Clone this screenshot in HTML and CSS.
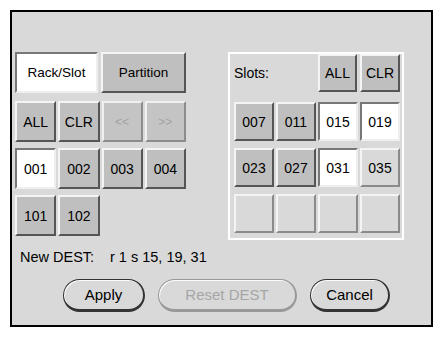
FILE: index.html
```html
<!DOCTYPE html>
<html lang="en">

<head>
  <meta name="viewport" content="width=device-width, initial-scale=1.0" />
  <title>Select DEST</title>
  <link rel="stylesheet" href="styles.css">
</head>

<body>
  <div class="frame">
    <div class="main">
      <div class="left">
        <div class="tabs">
          <div class="btn on">Rack/Slot</div>
          <div class="btn">Partition</div>
        </div>
        <div class="grid">
          <div class="btn">ALL</div>
          <div class="btn">CLR</div>
          <div class="btn off">&lt;&lt;</div>
          <div class="btn off">&gt;&gt;</div>
          <div class="btn on">001</div>
          <div class="btn">002</div>
          <div class="btn">003</div>
          <div class="btn">004</div>
          <div class="btn">101</div>
          <div class="btn">102</div>
        </div>
      </div>
      <div class="slots">
        <div class="slots-head">
          <span class="slots-label">Slots:</span>
          <div class="btn all">ALL</div>
          <div class="btn clr">CLR</div>
        </div>
        <div class="slot-grid">
          <div class="btn">007</div>
          <div class="btn">011</div>
          <div class="btn on">015</div>
          <div class="btn on">019</div>
          <div class="btn">023</div>
          <div class="btn">027</div>
          <div class="btn on">031</div>
          <div class="btn empty">035</div>
          <div class="btn empty"></div>
          <div class="btn empty"></div>
          <div class="btn empty"></div>
          <div class="btn empty"></div>
        </div>
      </div>
    </div>
    <div class="dest">
      <span class="dest-label">New DEST:</span>
      <span class="dest-value">r 1 s 15, 19, 31</span>
    </div>
    <div class="actions">
      <div class="pill apply">Apply</div>
      <div class="pill reset dim">Reset DEST</div>
      <div class="pill cancel">Cancel</div>
    </div>
  </div>
</body>

</html>
```

FILE: styles.css
```css
* {
  padding: 0;
  margin: 0;
  box-sizing: border-box;
}

body {
  background: #fff;
  font-family: "Liberation Sans", Arial, sans-serif;
  font-size: 14px;
  color: #000;
}

.frame {
  margin: 10px;
  width: 423px;
  height: 317px;
  border: 2px solid #000;
  background: #d9d9d9;
  padding: 40px 0 0 3px;
}

.main {
  display: flex;
  height: 188px;
}

.left {
  width: 171px;
}

.tabs {
  display: grid;
  grid-template-columns: 83px 85px;
  column-gap: 3px;
  height: 41px;
  margin-bottom: 8px;
}

.tabs .btn {
  font-size: 13.5px;
}

.grid {
  display: grid;
  grid-template-columns: repeat(4, 1fr);
  grid-auto-rows: 41px;
  gap: 6px 2px;
}

/* motif style bevelled buttons */
.btn {
  display: flex;
  align-items: center;
  justify-content: center;
  background: #bfbfbf;
  border: 2px solid;
  border-color: #f4f4f4 #555 #555 #f4f4f4;
}

.btn.on {
  background: #fff;
  border-color: #777 #eee #eee #777;
}

.btn.off {
  color: #a3a3a3;
  font-size: 12px;
  background: #c4c4c4;
  border-color: #f0f0f0 #8c8c8c #8c8c8c #f0f0f0;
}

.btn.empty {
  background: #d9d9d9;
  border-color: #f4f4f4 #8a8a8a #8a8a8a #f4f4f4;
}

.slots {
  margin-left: 42px;
  width: 176px;
  height: 188px;
  border: 2px solid #fff;
  padding: 0 2px 5px 4px;
}

.slots-head {
  display: flex;
  align-items: center;
  height: 38px;
  margin-bottom: 10px;
}

.slots-label {
  flex: 1;
}

.slots-head .all {
  width: 39px;
  height: 38px;
  margin-right: 3px;
}

.slots-head .clr {
  width: 40px;
  height: 38px;
}

.slot-grid {
  display: grid;
  grid-template-columns: repeat(4, 1fr);
  grid-auto-rows: 39px;
  gap: 7px 2px;
}

.dest {
  margin-top: 9px;
  line-height: 16px;
  padding-left: 5px;
  display: flex;
  font-size: 14.5px;
}

.dest-label {
  width: 90px;
}

.actions {
  display: flex;
  margin-top: 14px;
  padding-left: 48px;
  gap: 13px;
}

.pill {
  height: 33px;
  border-radius: 17px;
  display: flex;
  align-items: center;
  justify-content: center;
  font-size: 15px;
  border: 1px solid #333;
  border-right-width: 2px;
  border-bottom-width: 3px;
  box-shadow: inset 1px 1px 0 #fafafa;
  background: #d9d9d9;
}

.apply {
  width: 82px;
}

.reset {
  width: 139px;
}

.cancel {
  width: 80px;
}

.pill.dim {
  color: #a6a6a6;
  border-color: #999;
}
```
